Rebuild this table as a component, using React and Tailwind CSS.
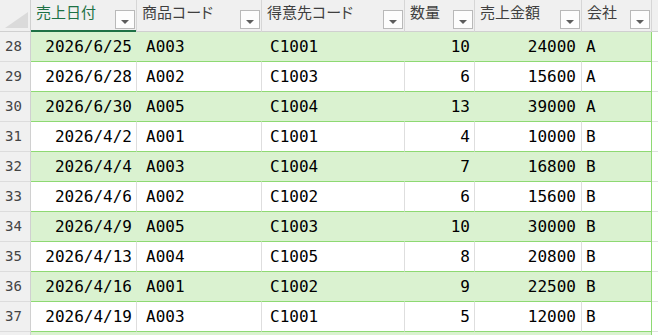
import React from "react";

const COLS = [
  { label: "売上日付", w: "w-[106px]", cell: "justify-end pr-[4px]", selected: true },
  { label: "商品コード", w: "w-[125px]", cell: "justify-start pl-[9px]" },
  { label: "得意先コード", w: "w-[143px]", cell: "justify-start pl-[8px]" },
  { label: "数量", w: "w-[70px]", cell: "justify-end pr-[4px]" },
  { label: "売上金額", w: "w-[107px]", cell: "justify-end pr-[5px]" },
  { label: "会社", w: "w-[70px]", cell: "justify-start pl-[4px]", last: true },
];

const ROWS = [
  ["2026/6/25", "A003", "C1001", 10, 24000, "A"],
  ["2026/6/28", "A002", "C1003", 6, 15600, "A"],
  ["2026/6/30", "A005", "C1004", 13, 39000, "A"],
  ["2026/4/2", "A001", "C1001", 4, 10000, "B"],
  ["2026/4/4", "A003", "C1004", 7, 16800, "B"],
  ["2026/4/6", "A002", "C1002", 6, 15600, "B"],
  ["2026/4/9", "A005", "C1003", 10, 30000, "B"],
  ["2026/4/13", "A004", "C1005", 8, 20800, "B"],
  ["2026/4/16", "A001", "C1002", 9, 22500, "B"],
  ["2026/4/19", "A003", "C1001", 5, 12000, "B"],
];

function FilterButton() {
  return (
    <div className="w-[20px] h-[19px] mr-[1px] border border-[#b9b9b9] bg-[#fdfdfd] flex items-center justify-center pt-[4px] shrink-0">
      <svg width="8" height="4" viewBox="0 0 8 4">
        <polygon points="0,0 8,0 4,4" fill="#5c5c5c" />
      </svg>
    </div>
  );
}

function HeaderRow() {
  return (
    <div className="flex h-[32px] bg-[#f0f0f0]">
      {/* select-all corner */}
      <div className="w-[31px] shrink-0 border-r border-[#d0d0d0] flex items-end justify-end shadow-[inset_0_-1px_0_#d0d0d0]">
        <svg width="24" height="17" viewBox="0 0 24 17" className="mb-[3px] mr-[1px]">
          <polygon points="0,16 23,16 23,0" fill="#dadada" />
        </svg>
      </div>
      {COLS.map((c) => (
        <div
          key={c.label}
          className={
            c.w +
            " shrink-0 flex justify-between border-r border-[#d6d6d6] pl-[5px] pb-[3px] " +
            (c.selected
              ? "shadow-[inset_0_-2px_0_#1e7145] text-[#1e7145]"
              : "shadow-[inset_0_-1px_0_#d0d0d0] text-[#3f3f3f]")
          }
        >
          <span className="pt-[4px] text-[15px] leading-[16px] [font-feature-settings:'palt']">
            {c.label}
          </span>
          <div className="self-end">
            <FilterButton />
          </div>
        </div>
      ))}
      <div className="flex-1 shadow-[inset_0_-1px_0_#d0d0d0]" />
    </div>
  );
}

function DataRow({ num, values, green }) {
  return (
    <div className="flex h-[30px]">
      <div className="w-[31px] shrink-0 bg-[#f0f0f0] border-r border-b border-r-[#d0d0d0] border-b-[#dcdcdc] flex items-center pl-[5px] text-[14px] text-[#444] font-['DejaVu_Sans_Mono',monospace]">
        {num}
      </div>
      {COLS.map((c, i) => (
        <div
          key={c.label}
          className={
            c.w +
            " " +
            c.cell +
            " shrink-0 flex items-center border-r border-b border-b-[#8ed973] text-[16px] text-black font-['DejaVu_Sans_Mono',monospace] " +
            (green ? "bg-[#daf2d0] " : "bg-white ") +
            (c.last
              ? "border-r-[#8ed973]"
              : green
              ? "border-r-[#daf2d0]"
              : "border-r-[#dedede]")
          }
        >
          {values ? values[i] : ""}
        </div>
      ))}
      <div className="flex-1 bg-white border-b border-[#e1e1e1]" />
    </div>
  );
}

export default function App() {
  return (
    <div className="w-[658px] h-[335px] overflow-hidden bg-white font-['Noto_Sans_CJK_JP',sans-serif]">
      <HeaderRow />
      {ROWS.map((r, i) => (
        <DataRow key={i} num={28 + i} values={r} green={i % 2 === 0} />
      ))}
      {/* next row, only its top edge is in view */}
      <DataRow num="" values={null} green={true} />
    </div>
  );
}
